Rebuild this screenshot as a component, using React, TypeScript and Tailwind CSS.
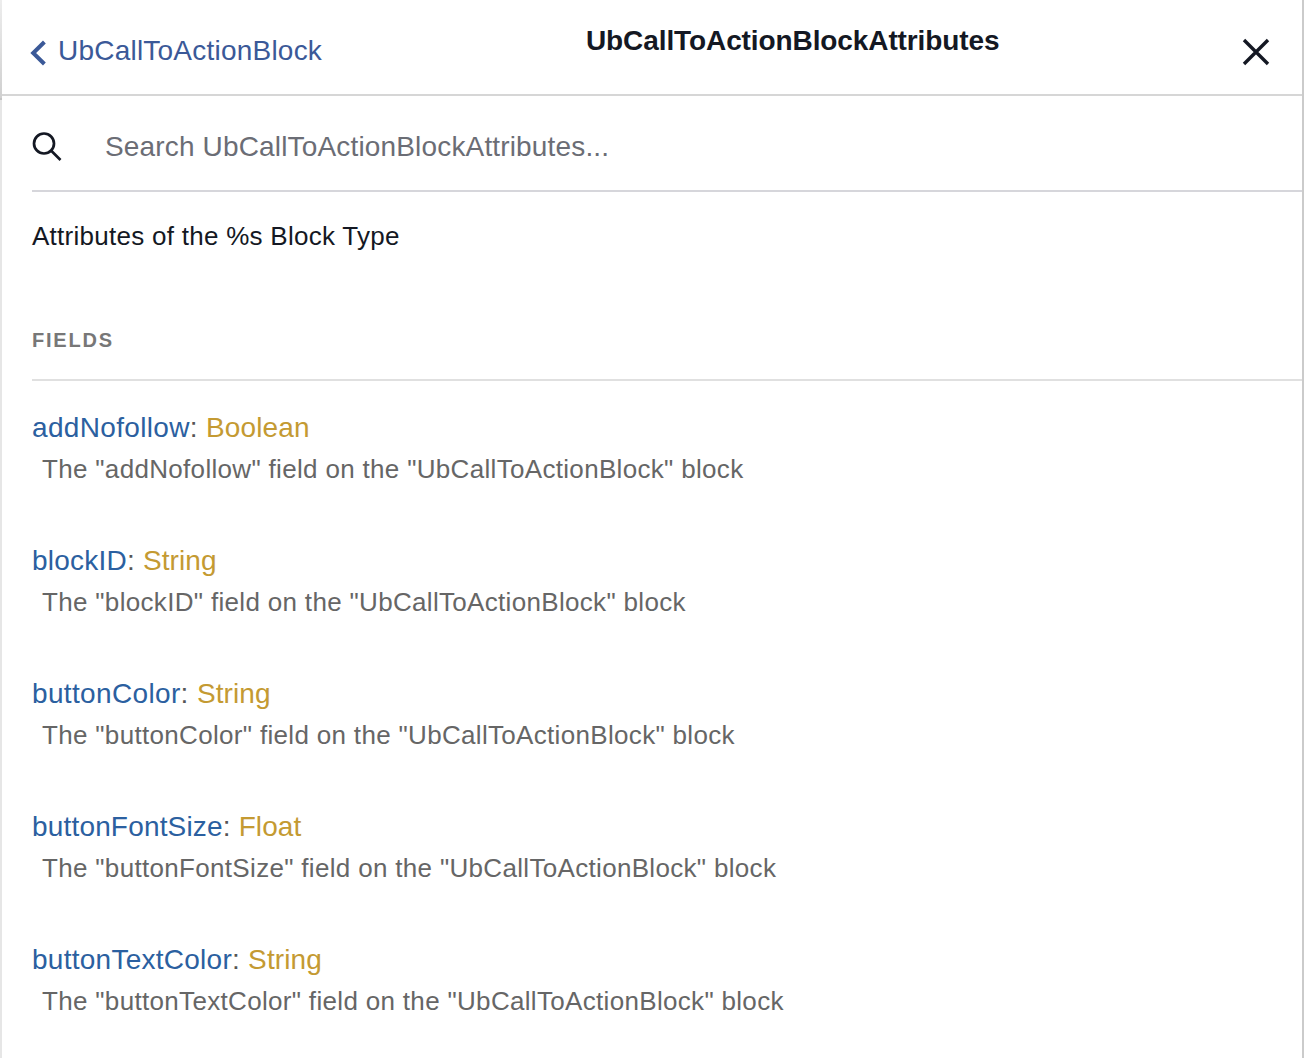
const fields = [
  { name: "addNofollow", type: "Boolean", spacing: "tracking-[0.34px]" },
  { name: "blockID", type: "String", spacing: "tracking-[0.22px]" },
  { name: "buttonColor", type: "String", spacing: "tracking-[0.35px]" },
  { name: "buttonFontSize", type: "Float", spacing: "tracking-[0.17px]" },
  { name: "buttonTextColor", type: "String", spacing: "tracking-[0.26px]" },
];

export default function App() {
  return (
    <div className="flex h-[1058px] w-[1304px] overflow-hidden bg-white font-['Liberation_Sans',Arial,sans-serif] text-[#141823]">
      <div className="w-0.5 shrink-0 bg-[#e6e6e6]">
        <div className="h-[98px] bg-linear-to-b from-[#ededed] to-[#d0d0d0]" />
        <div className="h-0.5 bg-[#c4c4c4]" />
      </div>
      <div className="min-w-0 flex-1 border-r-2 border-[#cbcbcb]">
        <header className="flex h-24 border-b-2 border-[#d6d6d6]">
          <a className="flex w-[584px] gap-[11px] pl-7 pt-[31px] text-[28px] leading-[38px] text-[#3b5998]">
            <svg className="mt-2 h-7 w-[17px] shrink-0" viewBox="0 0 17 28" fill="none" stroke="currentColor" strokeWidth="4">
              <path d="M14.4 3 3.2 14l11.2 11" />
            </svg>
            <span className="mt-px whitespace-nowrap tracking-[0.22px]">UbCallToActionBlock</span>
          </a>
          <h1 className="w-[656px] whitespace-nowrap pt-[22px] text-[28px] font-bold leading-[38px] tracking-[-0.1px]">UbCallToActionBlockAttributes</h1>
          <svg className="mt-[38px] h-7 w-7 shrink-0" viewBox="0 0 28 28" fill="none" stroke="currentColor" strokeWidth="3.4">
            <path d="m2 2 24 24M26 2 2 26" />
          </svg>
        </header>
        <main className="pl-[30px]">
          <div className="flex h-24 border-b-2 border-[#d6d6db]">
            <svg className="mt-9 h-[30px] w-[30px] shrink-0" viewBox="0 0 30 30" fill="none" stroke="currentColor" strokeWidth="2.7">
              <circle cx="12" cy="11.5" r="10" />
              <path d="m19 18.5 9.5 9.5" />
            </svg>
            <span className="ml-[43px] mt-8 whitespace-nowrap text-[28px] leading-[38px] tracking-[0.16px] text-[#6b6d75]">Search UbCallToActionBlockAttributes...</span>
          </div>
          <p className="h-[134px] pt-6 text-[26px] leading-[40px] tracking-[0.27px]">Attributes of the %s Block Type</p>
          <h2 className="h-[55px] border-b-2 border-[#e0e0e0] text-[20px] font-bold leading-7 tracking-[1.8px] text-[#777]">FIELDS</h2>
          <div className="pt-[26px]">
            {fields.map(({ name, type, spacing }) => (
              <div key={name} className="h-[133px] whitespace-nowrap">
                <div className="text-[28px] leading-[42px] text-[#555]">
                  <span className={spacing}><span className="text-[#2b60a0]">{name}</span>: </span>
                  <span className="tracking-[0.1px] text-[#c49a32]">{type}</span>
                </div>
                <p className="pl-[10px] text-[26px] leading-[40px] tracking-[0.32px] text-[#666]">The "{name}" field on the "UbCallToActionBlock" block</p>
              </div>
            ))}
          </div>
        </main>
      </div>
    </div>
  );
}
